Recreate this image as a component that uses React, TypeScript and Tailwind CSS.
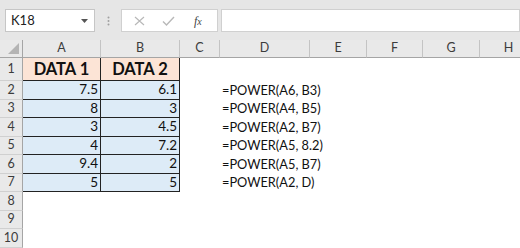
import { ReactNode } from 'react';

const cols = ['A', 'B', 'C', 'D', 'E', 'F', 'G', 'H'];

const data: [number, string, string, string][] = [
  [2, '7.5', '6.1', '=POWER(A6, B3)'],
  [3, '8', '3', '=POWER(A4, B5)'],
  [4, '3', '4.5', '=POWER(A2, B7)'],
  [5, '4', '7.2', '=POWER(A5, 8.2)'],
  [6, '9.4', '2', '=POWER(A5, B7)'],
  [7, '5', '5', '=POWER(A2, D)'],
];

function RowHead({ n, tall }: { n: number; tall?: boolean }) {
  return (
    <div
      className={`${tall ? 'h-[23px]' : 'h-[18.5px]'} flex items-center justify-center leading-none bg-[#e9e9e9] border-r border-b border-r-[#a5a5a5] border-b-[#d0d0d0] text-[12.5px] text-[#3c3c3c]`}
    >
      {n}
    </div>
  );
}

function Cell({ children, cls = '' }: { children?: ReactNode; cls?: string }) {
  return <div className={`h-[18.5px] leading-none flex items-center ${cls}`}>{children}</div>;
}

export default function App() {
  return (
    <div className="w-[520px] h-[248px] overflow-hidden bg-white text-[#111]" style={{ fontFamily: 'Lato, "Open Sans", sans-serif' }}>
      {/* Formula bar */}
      <div className="h-[40px] bg-[#e6e6e6] flex items-start pt-[9px] pl-[5px]">
        <div className="w-[90px] h-[23px] bg-white border border-[#c6c6c6] flex items-center justify-between pl-[5px] pr-[6px]">
          <span className="text-[13px] text-[#222]">K18</span>
          <svg width="7" height="4" viewBox="0 0 7 4">
            <path d="M0 0h7L3.5 4z" fill="#555" />
          </svg>
        </div>
        <div className="w-[26px] h-[23px] flex items-center justify-center">
          <svg width="3" height="10" viewBox="0 0 3 10">
            <circle cx="1.5" cy="1.5" r="1" fill="#a0a0a0" />
            <circle cx="1.5" cy="5" r="1" fill="#a0a0a0" />
            <circle cx="1.5" cy="8.5" r="1" fill="#a0a0a0" />
          </svg>
        </div>
        <div className="w-[97px] h-[23px] bg-white border border-[#d0d0d0] flex items-center pl-[12px] gap-[17px]">
          <svg width="11" height="10" viewBox="0 0 11 10">
            <path d="M1 1l9 8M10 1l-9 8" stroke="#b8b8b8" strokeWidth="1.2" fill="none" />
          </svg>
          <svg width="13" height="10" viewBox="0 0 13 10">
            <path d="M1 5.5l3.5 3.5L12 1" stroke="#b8b8b8" strokeWidth="1.4" fill="none" />
          </svg>
          <span className="text-[12px] italic text-[#444] ml-[2px]" style={{ fontFamily: '"Liberation Serif", serif' }}>
            f<span className="text-[10px]">x</span>
          </span>
        </div>
        <div className="flex-1 h-[23px] ml-[3px] bg-white border border-[#d0d0d0]" />
      </div>

      {/* Sheet */}
      <div className="grid grid-cols-[23px_78px_79px_40px_90px_57px_56px_57px_58px]">
        {/* Column headers */}
        <div className="h-[18px] bg-[#e9e9e9] border-r border-b border-[#a5a5a5] relative">
          <svg className="absolute right-[3px] bottom-[3px]" width="11" height="11" viewBox="0 0 11 11">
            <path d="M11 0v11H0z" fill="#b4b4b4" />
          </svg>
        </div>
        {cols.map((c) => (
          <div
            key={c}
            className="h-[18px] leading-none flex items-center justify-center bg-[#e9e9e9] border-r border-b border-r-[#c4c4c4] border-b-[#a5a5a5] text-[12.5px] text-[#3c3c3c]"
          >
            {c}
          </div>
        ))}

        {/* Row 1 */}
        <RowHead n={1} tall />
        <div className="h-[23px] leading-none flex items-center justify-center bg-[#fce4d6] border-r border-b border-[#222] text-[16.5px] font-bold">DATA 1</div>
        <div className="h-[23px] leading-none flex items-center justify-center bg-[#fce4d6] border-r border-b border-[#222] text-[16.5px] font-bold">DATA 2</div>
        {cols.slice(2).map((c) => (
          <div key={c} className="h-[23px]" />
        ))}

        {data.map(([n, a, b, f]) => (
          <div key={n} className="contents">
            <RowHead n={n} />
            <Cell cls="justify-end pr-[2px] bg-[#ddebf7] border-r border-b border-[#222] text-[13.5px]">{a}</Cell>
            <Cell cls="justify-end pr-[2px] bg-[#ddebf7] border-r border-b border-[#222] text-[13.5px]">{b}</Cell>
            <Cell />
            <Cell cls="pl-[2px] whitespace-nowrap text-[12.8px]">{f}</Cell>
            <Cell />
            <Cell />
            <Cell />
            <Cell />
          </div>
        ))}

        {[8, 9, 10].map((n) => (
          <div key={n} className="contents">
            <RowHead n={n} />
            {cols.map((c) => (
              <div key={c} className="h-[18.5px]" />
            ))}
          </div>
        ))}
      </div>
    </div>
  );
}
